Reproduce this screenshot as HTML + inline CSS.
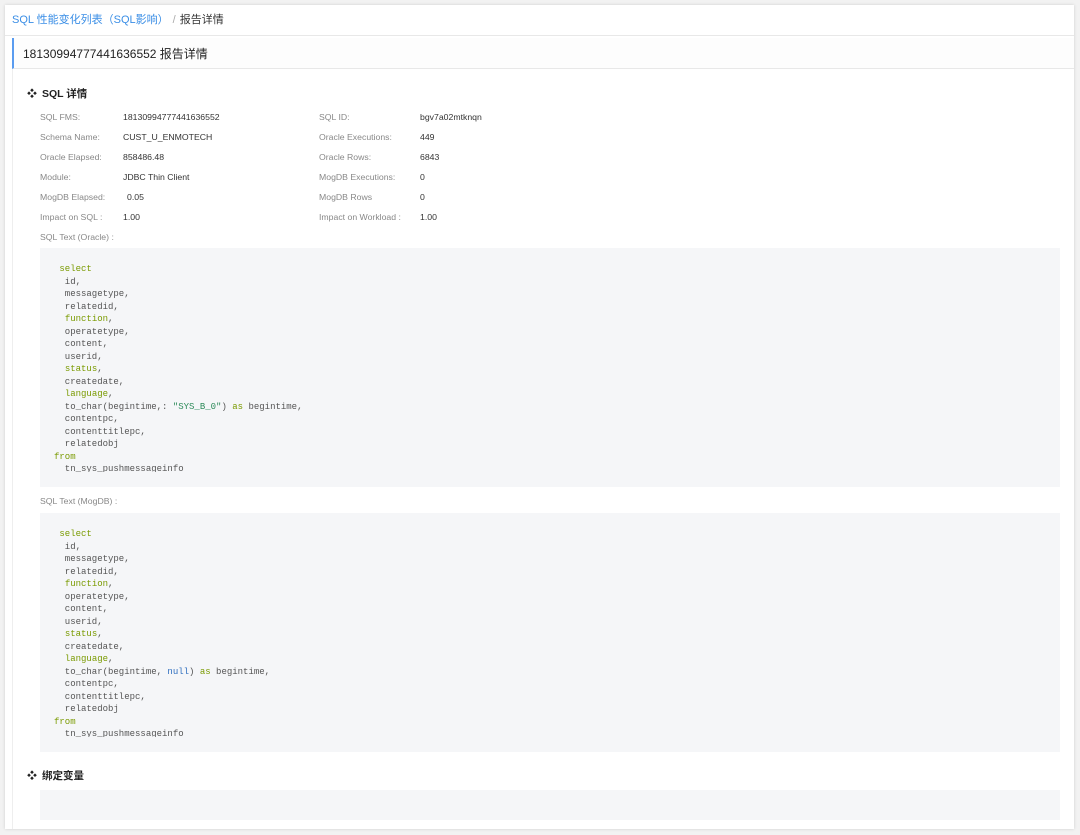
<!DOCTYPE html>
<html><head><meta charset="utf-8"><style>
body{margin:0;width:1080px;height:835px;background:#f2f2f2;font-family:"Liberation Sans","Noto Sans CJK SC",sans-serif;overflow:hidden;position:relative}
.card{position:absolute;left:5px;top:5px;width:1069px;height:824px;background:#fff;box-shadow:0 0 3px rgba(0,0,0,.15)}
.bc{position:absolute;left:7px;top:6px;font-size:11px;color:#333}
.bc a{color:#3a8ee6}
.bc .s{color:#aaa;margin:0 4px}
.hl{position:absolute;left:0;right:0;top:30px;border-top:1px solid #e8e8e8}
.tt{position:absolute;left:7px;right:0;top:33px;height:30px;border-left:2px solid #5a9cf0;border-bottom:1px solid #e8e8e8;background:#fdfdfd}
.tt span{position:absolute;left:9px;top:7px;font-size:12px;color:#222}
.content{position:absolute;left:7px;right:0;top:64px;bottom:0;border-left:1px solid #eee}
.h{position:absolute;font-size:10.5px;font-weight:bold;color:#222}
.h i{font-style:normal;margin-right:5px;font-size:10px}
.lab{position:absolute;font-size:8.7px;color:#888}
.val{position:absolute;font-size:8.7px;color:#333}
.code{position:absolute;left:35px;width:1020px;background:#f5f6f8}
.in{position:absolute;left:14px;top:15px;font-family:"Liberation Mono","DejaVu Sans Mono",monospace;font-size:9px;line-height:12.5px;color:#555;white-space:pre;overflow:hidden}
.k{color:#7a9a00}.st{color:#2d8b5a}.n{color:#2f6fbf}
</style></head><body>
<div class="card">
<div class="bc"><a>SQL 性能变化列表（SQL影响）</a><span class="s">/</span>报告详情</div>
<div class="hl"></div>
<div class="tt"><span>18130994777441636552 报告详情</span></div>
<div class="content"></div>
<div class="h" style="left:22px;top:80px"><i>❖</i>SQL 详情</div>

<div class="lab" style="left:35px;top:107px">SQL FMS:</div><div class="val" style="left:118px;top:107px">18130994777441636552</div>
<div class="lab" style="left:314px;top:107px">SQL ID:</div><div class="val" style="left:415px;top:107px">bgv7a02mtknqn</div>
<div class="lab" style="left:35px;top:127px">Schema Name:</div><div class="val" style="left:118px;top:127px">CUST_U_ENMOTECH</div>
<div class="lab" style="left:314px;top:127px">Oracle Executions:</div><div class="val" style="left:415px;top:127px">449</div>
<div class="lab" style="left:35px;top:147px">Oracle Elapsed:</div><div class="val" style="left:118px;top:147px">858486.48</div>
<div class="lab" style="left:314px;top:147px">Oracle Rows:</div><div class="val" style="left:415px;top:147px">6843</div>
<div class="lab" style="left:35px;top:167px">Module:</div><div class="val" style="left:118px;top:167px">JDBC Thin Client</div>
<div class="lab" style="left:314px;top:167px">MogDB Executions:</div><div class="val" style="left:415px;top:167px">0</div>
<div class="lab" style="left:35px;top:187px">MogDB Elapsed:</div><div class="val" style="left:122px;top:187px">0.05</div>
<div class="lab" style="left:314px;top:187px">MogDB Rows</div><div class="val" style="left:415px;top:187px">0</div>
<div class="lab" style="left:35px;top:207px">Impact on SQL :</div><div class="val" style="left:118px;top:207px">1.00</div>
<div class="lab" style="left:314px;top:207px">Impact on Workload :</div><div class="val" style="left:415px;top:207px">1.00</div>
<div class="lab" style="left:35px;top:227px">SQL Text (Oracle) :</div>

<div class="code" style="top:243px;height:239px"><div class="in" style="height:209px"> <span class="k">select</span>
  id,
  messagetype,
  relatedid,
  <span class="k">function</span>,
  operatetype,
  content,
  userid,
  <span class="k">status</span>,
  createdate,
  <span class="k">language</span>,
  to_char(begintime,: <span class="st">"SYS_B_0"</span>) <span class="k">as</span> begintime,
  contentpc,
  contenttitlepc,
  relatedobj
<span class="k">from</span>
  tn_sys_pushmessageinfo</div></div>

<div class="lab" style="left:35px;top:491px">SQL Text (MogDB) :</div>
<div class="code" style="top:508px;height:239px"><div class="in" style="height:209px"> <span class="k">select</span>
  id,
  messagetype,
  relatedid,
  <span class="k">function</span>,
  operatetype,
  content,
  userid,
  <span class="k">status</span>,
  createdate,
  <span class="k">language</span>,
  to_char(begintime, <span class="n">null</span>) <span class="k">as</span> begintime,
  contentpc,
  contenttitlepc,
  relatedobj
<span class="k">from</span>
  tn_sys_pushmessageinfo</div></div>

<div class="h" style="left:22px;top:762px"><i>❖</i>绑定变量</div>
<div class="code" style="top:785px;height:30px"></div>
</div>
</body></html>
